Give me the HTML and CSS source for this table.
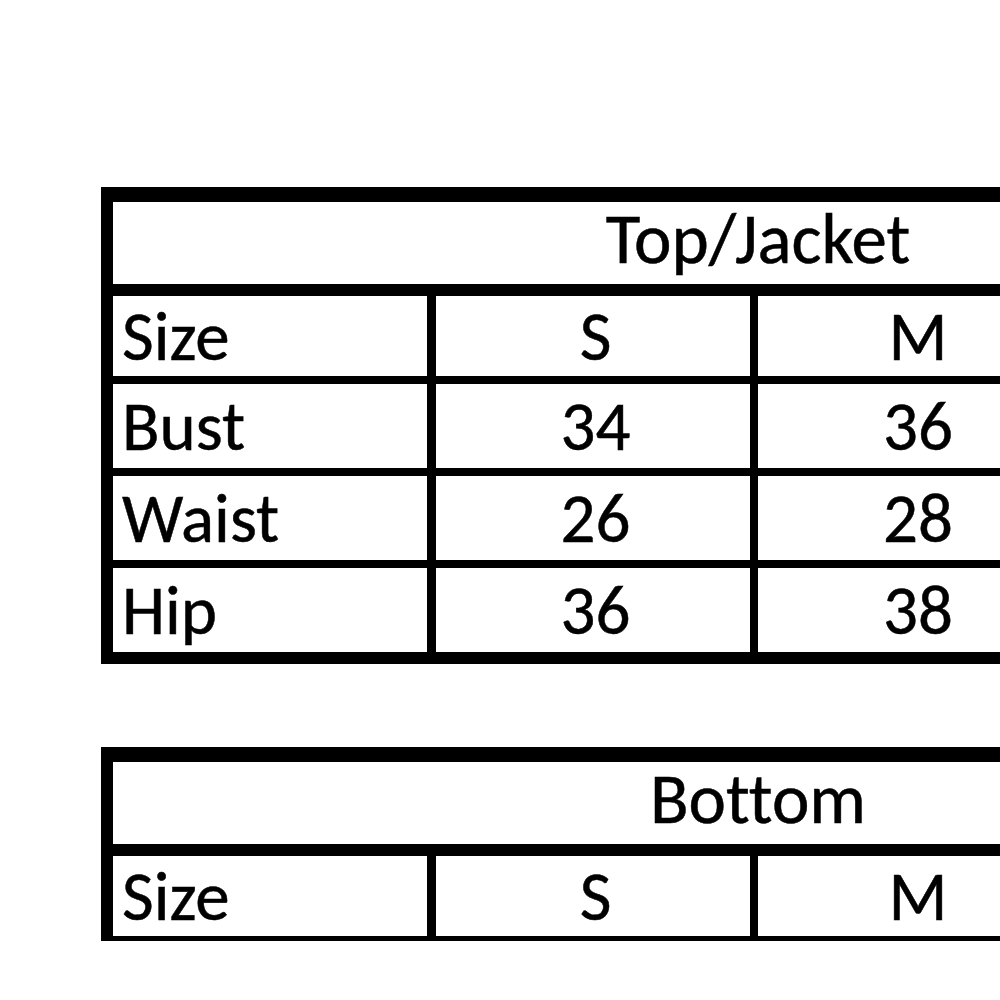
FILE: index.html
```html
<!DOCTYPE html>
<html lang="en">
<head>
<meta charset="utf-8">
<title>Size Chart</title>
<link rel="stylesheet" href="styles.css">
</head>
<body>
<main class="page">
  <section class="chart chart-top">
    <div class="title">Top/Jacket</div>
    <div class="rows">
      <div class="row row-first">
        <div class="cell label">Size</div><div class="cell">S</div><div class="cell">M</div><div class="cell"></div>
      </div>
      <div class="row">
        <div class="cell label">Bust</div><div class="cell">34</div><div class="cell">36</div><div class="cell"></div>
      </div>
      <div class="row">
        <div class="cell label">Waist</div><div class="cell">26</div><div class="cell">28</div><div class="cell"></div>
      </div>
      <div class="row">
        <div class="cell label">Hip</div><div class="cell">36</div><div class="cell">38</div><div class="cell"></div>
      </div>
    </div>
  </section>
  <section class="chart chart-bottom">
    <div class="title">Bottom</div>
    <div class="rows">
      <div class="row row-first">
        <div class="cell label">Size</div><div class="cell">S</div><div class="cell">M</div><div class="cell"></div>
      </div>
    </div>
  </section>
</main>
</body>
</html>
```
FILE: styles.css
```css
html, body {
  margin: 0;
  padding: 0;
  background: #fff;
}
.page {
  width: 1000px;
  height: 1000px;
  overflow: hidden;
  padding: 187px 0 0 101px;
  box-sizing: border-box;
  font-family: "Carlito", "Lato", "Open Sans", sans-serif;
  font-variant-ligatures: none;
  color: #000;
  -webkit-text-stroke: 0.5px #000;
}
.chart {
  width: 1294px;
  background: #000;
  padding: 15px 0 12px 12px;
  box-sizing: border-box;
  display: flex;
  flex-direction: column;
  gap: 12px;
}
.chart-bottom {
  margin-top: 83px;
  padding-bottom: 5px;
}
.title {
  background: #fff;
  height: 82px;
  display: flex;
  align-items: center;
  justify-content: center;
  font-size: 71px;
  line-height: 1;
  padding-bottom: 10px;
  padding-left: 8px;
  box-sizing: border-box;
}
.rows {
  display: flex;
  flex-direction: column;
  gap: 8px;
}
.row {
  display: grid;
  grid-template-columns: 314px 314px 314px 314px;
  column-gap: 8.5px;
  height: 84px;
}
.row-first {
  height: 80px;
}
.cell {
  background: #fff;
  display: flex;
  align-items: center;
  justify-content: center;
  font-size: 69px;
  line-height: 1;
  padding-left: 6px;
}
.cell.label {
  justify-content: flex-start;
  padding-left: 9px;
}
```
